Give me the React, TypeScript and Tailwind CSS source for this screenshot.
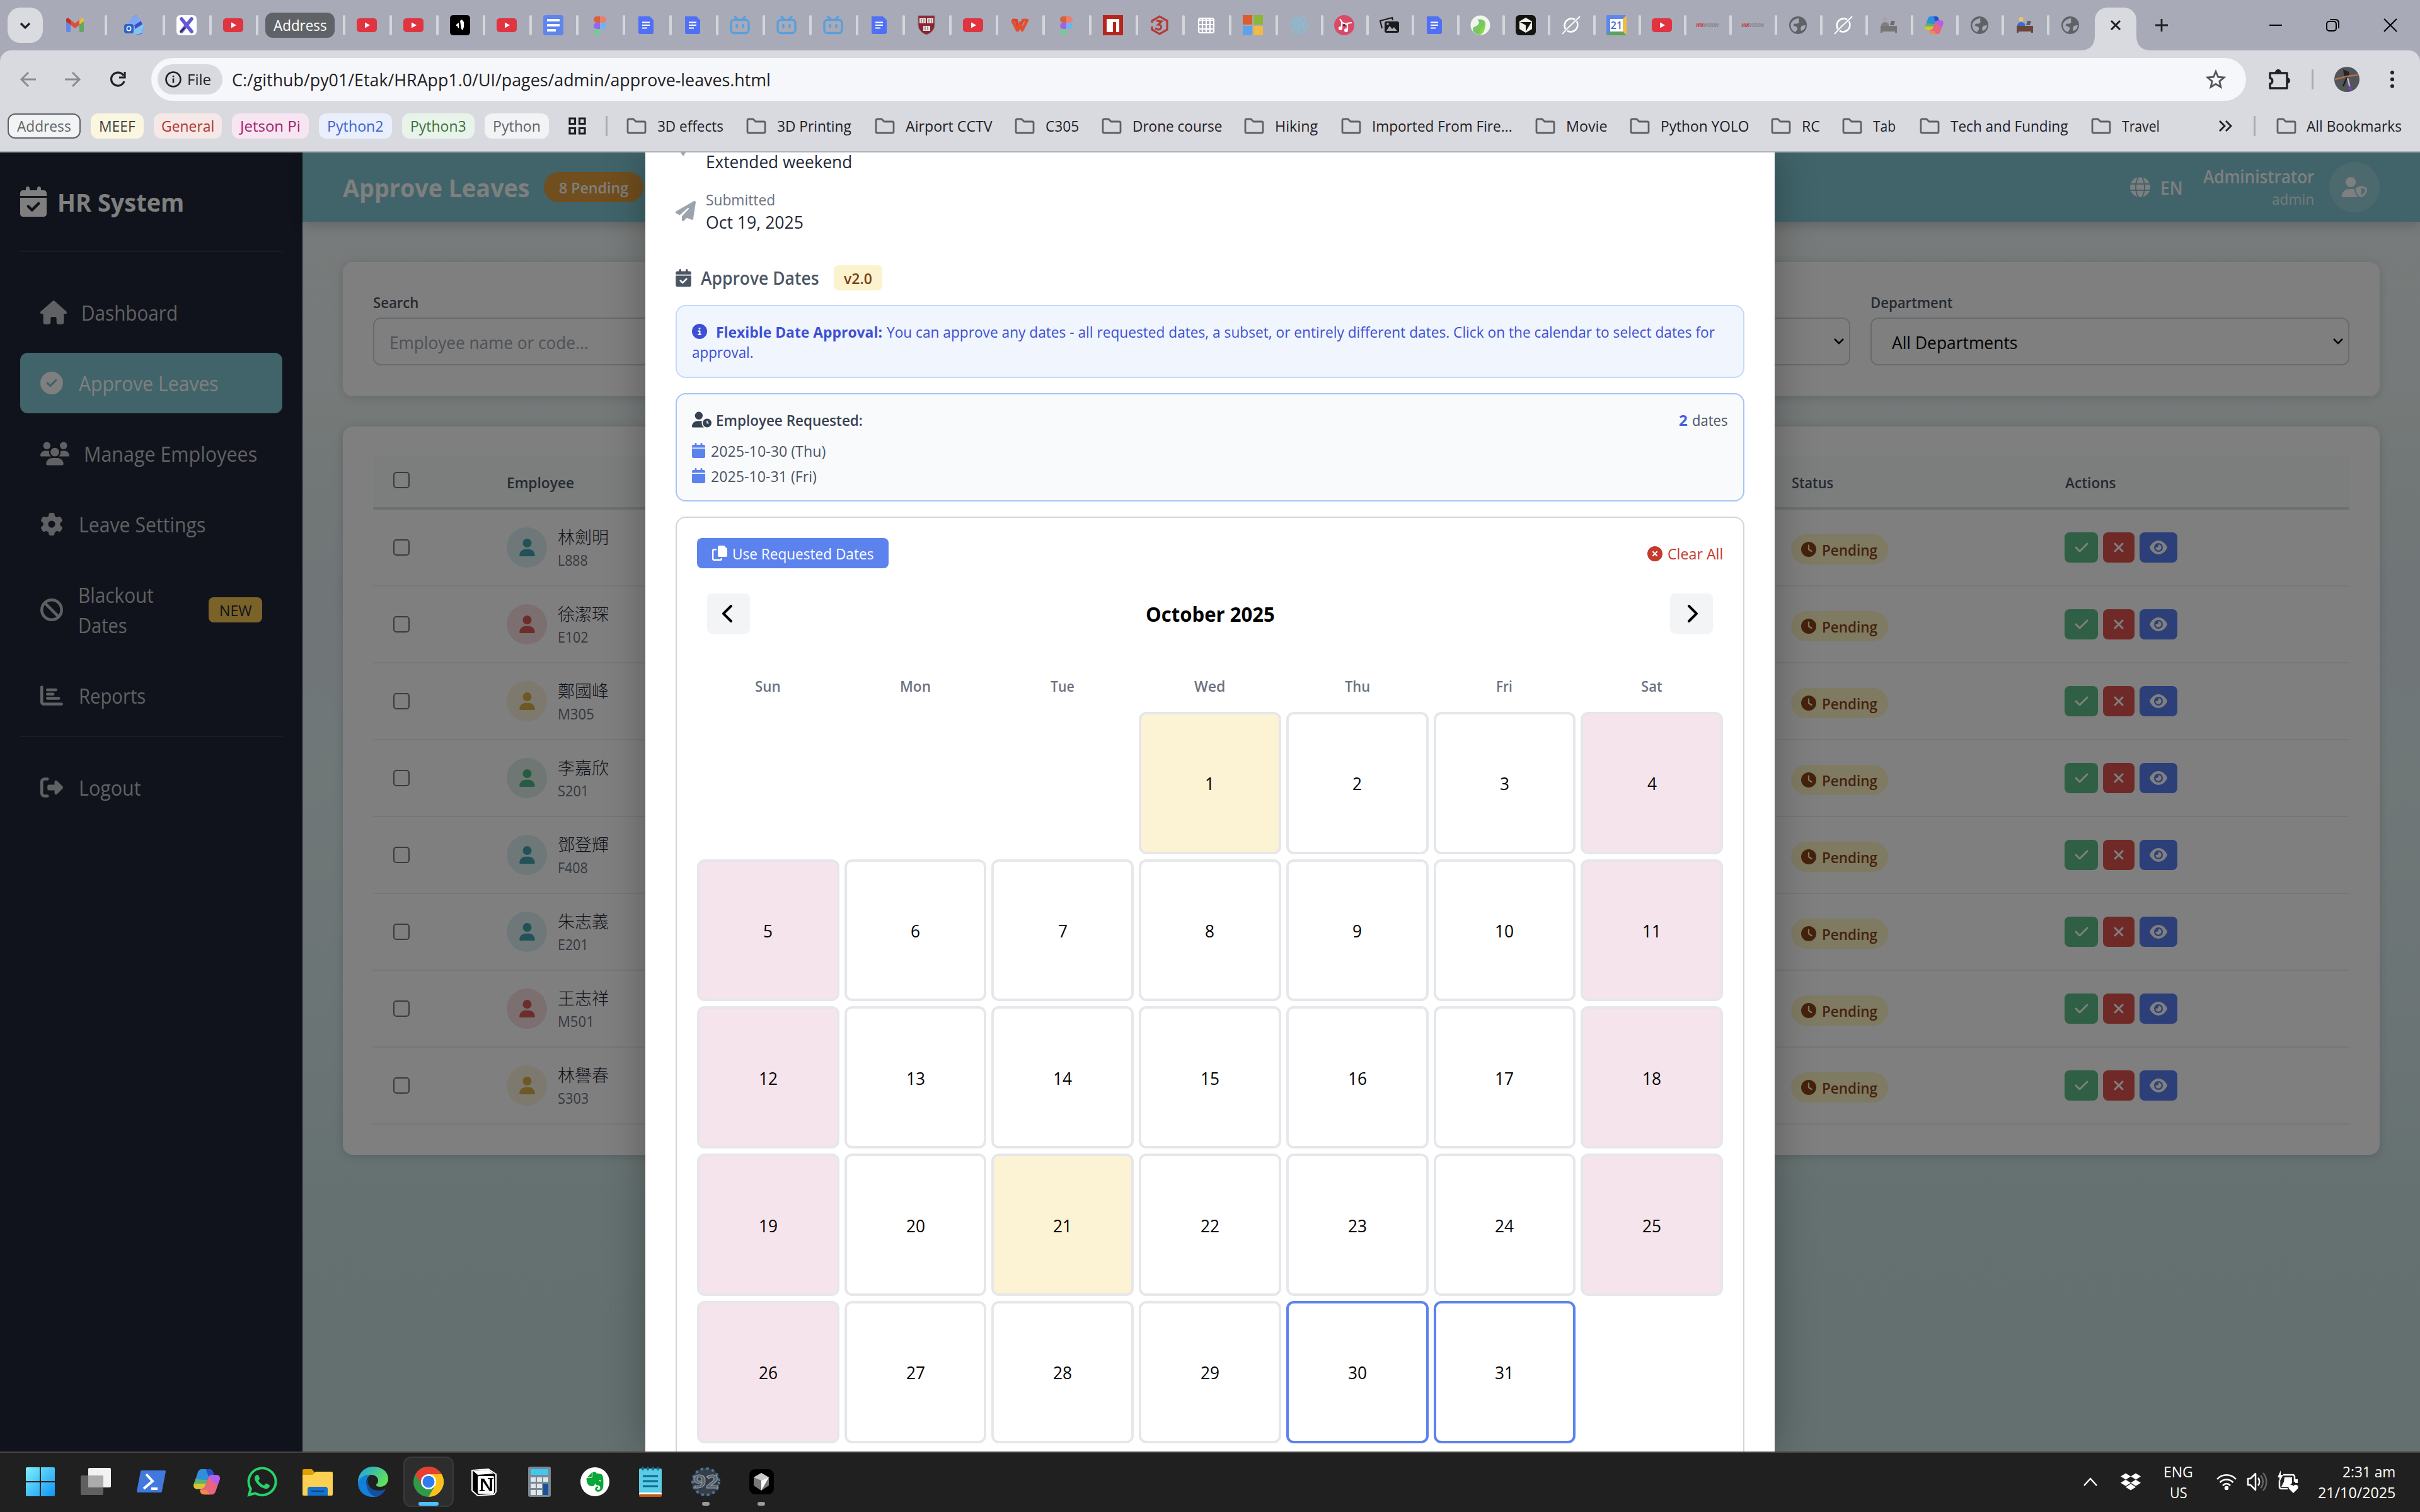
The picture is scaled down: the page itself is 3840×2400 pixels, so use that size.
import { useLayoutEffect, useRef, useState } from "react";
import type { ReactNode } from "react";
import {
  FaBan,
  FaCalendar,
  FaCalendarCheck,
  FaChartBar,
  FaCheck,
  FaChevronLeft,
  FaChevronRight,
  FaCircleCheck,
  FaCircleInfo,
  FaCircleXmark,
  FaClock,
  FaDropbox,
  FaEvernote,
  FaEye,
  FaGear,
  FaGlobe,
  FaHouse,
  FaPaperPlane,
  FaRightFromBracket,
  FaUser,
  FaUserClock,
  FaUserShield,
  FaUsers,
  FaWhatsapp,
  FaXmark,
} from "react-icons/fa6";

/* One line of text, condensed or widened so that it fills the width it is given. */
function Fit({ w, className = "", children }: { w: number; className?: string; children: string }) {
  const ref = useRef<HTMLSpanElement>(null);
  const [scale, setScale] = useState(1);
  useLayoutEffect(() => {
    const el = ref.current;
    if (el && el.offsetWidth > 0) setScale(w / el.offsetWidth);
  }, [w, children]);
  return (
    <span className={"inline-block shrink-0 whitespace-nowrap " + className} style={{ width: w }}>
      <span
        ref={ref}
        className="inline-block origin-left translate-y-[var(--drop,0px)]"
        style={{ transform: `scaleX(${scale})` }}
      >
        {children}
      </span>
    </span>
  );
}

/* ---------- browser tab icons ---------- */

type IconKind =
  | "gmail" | "cloud" | "xtools" | "youtube" | "capcut" | "docs" | "figma" | "page" | "bili" | "shield"
  | "wps" | "npm" | "three" | "grid" | "ms" | "react" | "music" | "photos" | "leaf" | "cursor" | "slash"
  | "cal" | "hik" | "globe" | "deskGray" | "desk" | "copilot";

function Favicon({ kind }: { kind: IconKind }) {
  if (kind === "hik")
    return (
      <span className="text-[8px] font-bold italic leading-none tracking-tighter text-[#86868b]">
        <span className="text-[#c63a3a]">HIK</span>VISION
      </span>
    );
  if (kind === "cal")
    return (
      <span className="relative flex h-8 w-8 items-center justify-center overflow-hidden rounded-[3px] border-b-[6px] border-l-[6px] border-r-[6px] border-t-[6px] border-b-[#5aa35e] border-l-[#5e87ee] border-r-[#f0bd42] border-t-[#5e87ee] bg-white text-[16px] font-semibold leading-none text-[#3b6bd6]">
        21
      </span>
    );
  return (
    <svg viewBox="0 0 32 32" className="h-8 w-8">
      {kind === "gmail" && (
        <g>
          <path d="M2 8v17a2 2 0 0 0 2 2h5V13z" fill="#6287ea" />
          <path d="M30 8v17a2 2 0 0 1-2 2h-5V13z" fill="#5fa763" />
          <path d="M2 8c0-4 3-4 5-2l9 7 9-7v8l-9 7-9-7-5-3z" fill="#d9503f" />
          <path d="M2 8c0-4 3-4 5-2l2 2v7l-7-5z" fill="#b93328" />
          <path d="M30 8c0-4-3-4-5-2l-2 2v7l7-5z" fill="#eebb3c" />
        </g>
      )}
      {kind === "cloud" && (
        <g>
          <path d="M14 3l5-3 9 12 3 8-3 10-9 1z" fill="#3f4fc0" />
          <path d="M14 3l5-3 8 9-17 11-5-7z" fill="#7ea6f2" />
          <path d="M14 24l16-10 1 6-3 9-10 2z" fill="#7fc4f7" />
          <rect x="0" y="14" width="15" height="15" rx="4" fill="#2f62cc" />
          <circle cx="7.500" cy="21.500" r="3.2" fill="none" stroke="#fff" strokeWidth="1.6" />
        </g>
      )}
      {kind === "xtools" && (
        <g>
          <rect width="32" height="32" rx="6" fill="#fff" />
          <path d="M8 6l16 20M24 6L8 26" stroke="#6458d6" strokeWidth="5.500" strokeLinecap="round" />
          <path d="M13 20l-7 7" stroke="#222" strokeWidth="1.800" />
        </g>
      )}
      {kind === "youtube" && (
        <g>
          <rect y="5" width="32" height="22" rx="5" fill="#e03440" />
          <path d="M13 11.500l8 4.500-8 4.500z" fill="#fff" />
        </g>
      )}
      {kind === "capcut" && (
        <g>
          <rect width="32" height="32" rx="5" fill="#000" />
          <path d="M10 15l4-3v9l-2-2v-2h-2zM16 9l3-2 3 4v8l-2 5-2-2z" fill="#fff" />
        </g>
      )}
      {kind === "docs" && (
        <g>
          <rect width="32" height="32" rx="4" fill="#5e84ee" />
          <path d="M6 8h20M6 16h20M6 24h14" stroke="#fff" strokeWidth="4" />
        </g>
      )}
      {kind === "figma" && (
        <g>
          <path d="M16 2h-5a5 5 0 0 0 0 10h5z" fill="#d9603c" />
          <path d="M16 2h5a5 5 0 0 1 0 10h-5z" fill="#ea7f6c" />
          <path d="M16 12h-5a5 5 0 0 0 0 10h5z" fill="#9a63f6" />
          <circle cx="21" cy="17" r="5" fill="#67b6f8" />
          <path d="M16 22h-5a5 5 0 1 0 5 5z" fill="#6fce8f" />
        </g>
      )}
      {kind === "page" && (
        <g>
          <path d="M3 2h18l6 6v19a3 3 0 0 1-3 3H6a3 3 0 0 1-3-3z" fill="#4f70f5" />
          <path d="M9 11.500h12M9 16h12M9 20.500h8" stroke="#fff" strokeWidth="1.900" />
        </g>
      )}
      {kind === "bili" && (
        <g fill="none" stroke="#5a9fdc" strokeWidth="3.400" strokeLinecap="round">
          <rect x="2" y="7.500" width="28" height="21" rx="5" />
          <path d="M8 2.500l4 4M24 2.500l-4 4M11 15.500v3.500M21 15.500v3.500" />
        </g>
      )}
      {kind === "shield" && (
        <g>
          <path d="M3 1h26v14c0 9-7 14-13 16C10 29 3 24 3 15z" fill="#8f2330" stroke="#777" />
          <path d="M5 5h10v8H5zM17 5h10v8H17zM11 17h11v8H11z" fill="#e8e0e0" />
          <path d="M8 6v6M12 6v6M20 6v6M24 6v6M14 18v6M18 18v6" stroke="#555" />
        </g>
      )}
      {kind === "wps" && (
        <g fill="none" strokeWidth="4.500" strokeLinejoin="round">
          <path d="M4 8h7l2 16L22 7" stroke="#dd4030" />
          <path d="M4 8l8 16 5-12 3 12 8-16h-9" stroke="#e2502f" />
        </g>
      )}
      {kind === "npm" && (
        <g>
          <rect width="32" height="32" fill="#b7261b" />
          <path d="M6 6h20v21h-5V11h-5v16H6z" fill="#fff" />
        </g>
      )}
      {kind === "three" && (
        <g fill="none" stroke="#b23c3a" strokeWidth="3.200">
          <path d="M4 12V9l12-7 12 7v14l-12 7-12-7v-5" />
          <path d="M11 9l8 1-5 5c6 0 6 8 0 8l-5-2" />
        </g>
      )}
      {kind === "grid" && (
        <g stroke="#fff" fill="none" strokeWidth="2.200">
          <rect x="4" y="5" width="24" height="23" rx="3" />
          <path d="M4 8h24M4 15h24M4 22h24M10 6v22M16 6v22M22 6v22" />
        </g>
      )}
      {kind === "ms" && (
        <g>
          <path d="M0 0h15v15H0z" fill="#dd5b30" />
          <path d="M17 0h15v15H17z" fill="#8db53a" />
          <path d="M0 17h15v15H0z" fill="#5ea3ea" />
          <path d="M17 17h15v15H17z" fill="#f0ba44" />
        </g>
      )}
      {kind === "react" && (
        <g fill="none" stroke="#84bdd6" strokeWidth="1.800">
          <ellipse cx="16" cy="16" rx="15" ry="6" />
          <ellipse cx="16" cy="16" rx="15" ry="6" transform="rotate(60 16 16)" />
          <ellipse cx="16" cy="16" rx="15" ry="6" transform="rotate(120 16 16)" />
          <circle cx="16" cy="16" r="2" fill="#84bdd6" />
        </g>
      )}
      {kind === "music" && (
        <g>
          <circle cx="16" cy="16" r="16" fill="#d94a66" />
          <path d="M12 20V9M21 24V13l7-1M9 6l4 6 8 3" stroke="#fff" strokeWidth="2.200" fill="none" />
          <circle cx="10" cy="21" r="3" fill="#fff" />
          <circle cx="19" cy="24" r="3" fill="#fff" />
          <circle cx="16" cy="16" r="1.800" fill="#222" />
        </g>
      )}
      {kind === "photos" && (
        <g>
          <path d="M4 21L1 9l19-5 1 4" fill="none" stroke="#1b1b1d" strokeWidth="2.200" />
          <rect x="8" y="10" width="23" height="18" rx="3" fill="#1b1b1d" />
          <path d="M11 25l5-8 4 5 3-3 5 6z" fill="#a8aab7" />
          <circle cx="13" cy="14" r="1.800" fill="#a8aab7" />
        </g>
      )}
      {kind === "leaf" && (
        <g>
          <circle cx="16" cy="16" r="15.500" fill="#f0f6ef" />
          <path d="M11 7c8-2 14 2 13 8-1 9-4 16-10 16C4 30 1 20 8 18c6-2 8-7 3-11z" fill="#76c860" />
          <path d="M24 15c-1 9-4 16-10 16 1-8 5-12 10-16z" fill="#8fd63f" />
        </g>
      )}
      {kind === "cursor" && (
        <g>
          <rect width="32" height="32" rx="6" fill="#13130f" />
          <path d="M16 4l10 6v12l-10 6-10-6V10z" fill="#f2f0ea" />
          <path d="M7 11h18l-9 15V16z" fill="#13130f" />
        </g>
      )}
      {kind === "slash" && (
        <g fill="none" stroke="#fff" strokeWidth="2.600">
          <path d="M22 7a11 11 0 0 0-15 15M10 25a11 11 0 0 0 15-15" />
          <path d="M30 2C20 12 10 20 2 30" strokeWidth="2" />
        </g>
      )}
      {kind === "globe" && (
        <g>
          <circle cx="16" cy="16" r="14" fill="#5f6368" />
          <path d="M18 5c-3 3 2 6-2 8s-5-1-7 2 5 2 6 5-2 5-3 7c-6-2-9-9-7-14 2-4 7-8 13-8zM22 17l6-1c0 4-3 8-7 9l-1-4z" fill="#a8aab7" />
        </g>
      )}
      {(kind === "desk" || kind === "deskGray") && (
        <g>
          <circle cx="10" cy="6.500" r="3.500" fill={kind === "desk" ? "#f0c070" : "#a4a4a6"} />
          <path d="M4 17c0-7 9-8 12-3v3z" fill={kind === "desk" ? "#3c6bd0" : "#808083"} />
          <path d="M20 9h6l-2 7h-6z" fill={kind === "desk" ? "#55606c" : "#6a6a6d"} />
          <path d="M3 17h26v11h-3v-2H6v2H3z" fill={kind === "desk" ? "#6b463c" : "#757575"} />
        </g>
      )}
      {kind === "copilot" && <CopilotShape />}
    </svg>
  );
}

function CopilotShape() {
  return (
    <g>
      <path d="M10 2h9c3 0 4 3 4.500 5l-5 3-4 10c-1 3-3 4-5 4H6c-4 0-5-3-4-6l4-12c.7-2 2-4 4-4z" fill="#2f8fdc" />
      <path d="M3.500 13L2 18c-1 3 0 6 4 6h3.500c2 0 4-1 5-4l2-6z" fill="#5cb36a" />
      <path d="M2 18c-1 3 0 6 4 6h3.500c2 0 4-1 5-4l.7-2z" fill="#d8c432" />
      <path d="M19 2c3 0 4 3 4.500 5l1.500 3h-7l-3-8z" fill="#2450c8" />
      <path d="M22 30h-9c-3 0-4-2-4.500-5l5-3 4-10c1-3 3-3.500 5-3.500h4c4 0 4.500 3 3.500 6l-4 11.500c-.7 2-2 4-4 4z" fill="#e8657e" />
      <path d="M18 11c1-2.500 3-2.500 5-2.500h3.500c4 0 4.500 3 3.500 6l-2 5z" fill="#b45df0" />
      <path d="M13 30c-3 0-4-2-4.500-5h7L20 30z" fill="#f08a4a" />
    </g>
  );
}

const TABS: { kind?: IconKind; w: string }[] = [
  { kind: "gmail", w: "w-[100px] pl-1" },
  { kind: "cloud", w: "w-[92px]" },
  { kind: "xtools", w: "w-[74px]" },
  { kind: "youtube", w: "w-[74px]" },
  { w: "w-[138px]" },
  ...(["youtube", "youtube", "capcut", "youtube", "docs", "figma", "page", "page", "bili", "bili", "bili", "page", "shield",
    "youtube", "wps", "figma", "npm", "three", "grid", "ms"] as IconKind[]).map((kind) => ({ kind, w: "w-[74px]" })),
  ...(["react", "music", "photos", "page", "leaf", "cursor", "slash", "cal", "youtube", "hik", "hik", "globe", "slash",
    "deskGray", "copilot", "globe", "desk"] as IconKind[]).map((kind) => ({ kind, w: "w-[72px]" })),
  { kind: "globe", w: "w-[74px] pr-1" },
];

function TabStrip() {
  return (
    <div className="flex h-20 items-center bg-[#a8aab7] pl-3">
      <div className="flex h-14 w-14 items-center justify-center rounded-[20px] bg-[#dadbe0]">
        <svg viewBox="0 0 20 20" className="h-5 w-5">
          <path d="M3 7l7 7 7-7" fill="none" stroke="#1f2024" strokeWidth="3.200" />
        </svg>
      </div>
      {TABS.map((t, i) => (
        <div key={i} className={"flex shrink-0 items-center " + t.w}>
          <div className="flex flex-1 items-center justify-center">
            {t.kind ? (
              <Favicon kind={t.kind} />
            ) : (
              <span className="flex h-10 w-[110px] items-center justify-center rounded-xl bg-[#5f6368] text-white">
                <Fit w={85}>Address</Fit>
              </span>
            )}
          </div>
          {i < TABS.length - 1 && <div className="-mr-0.5 h-8 w-1 rounded-sm bg-[#d5d6dc]" />}
        </div>
      ))}
      <div className="flex h-20 items-end">
        <svg viewBox="0 0 24 24" className="-ml-6 h-6 w-6">
          <path d="M24 0v24H0c14 0 24-6 24-24z" fill="#d9dae0" />
        </svg>
        <div className="flex h-[68px] w-[66px] items-center justify-center rounded-t-[20px] bg-[#d9dae0] pb-3">
          <svg viewBox="0 0 18 18" className="h-[18px] w-[18px]">
            <path d="M2 2l14 14M16 2L2 16" stroke="#1f2024" strokeWidth="3" />
          </svg>
        </div>
        <svg viewBox="0 0 24 24" className="h-6 w-6">
          <path d="M0 0v24h24C10 24 0 18 0 0z" fill="#d9dae0" />
        </svg>
      </div>
      <svg viewBox="0 0 24 24" className="ml-1 h-6 w-6">
        <path d="M12 2v20M2 12h20" stroke="#1f2024" strokeWidth="2.800" />
      </svg>
      <svg viewBox="0 0 24 24" className="ml-[157px] h-6 w-6">
        <path d="M2 12h20" stroke="#000" strokeWidth="2" />
      </svg>
      <svg viewBox="0 0 24 24" className="ml-[67px] h-6 w-6" fill="none" stroke="#000" strokeWidth="2">
        <rect x="2" y="6" width="15" height="15" rx="4" />
        <path d="M7 3h8c4 0 6 2 6 6v8" />
      </svg>
      <svg viewBox="0 0 24 24" className="ml-[67px] h-6 w-6">
        <path d="M2 2l20 20M22 2L2 22" stroke="#000" strokeWidth="2" />
      </svg>
    </div>
  );
}

function Toolbar() {
  return (
    <div className="bg-[#a8aab7]">
      <div className="flex h-[92px] items-center rounded-t-[18px] bg-[#d9dae0]">
        <svg viewBox="0 0 28 28" className="ml-[31px] h-7 w-7" fill="none" stroke="#8b8c92" strokeWidth="3">
          <path d="M26 14H4M14 3L3 14l11 11" />
        </svg>
        <svg viewBox="0 0 28 28" className="ml-[42px] h-7 w-7" fill="none" stroke="#8b8c92" strokeWidth="3">
          <path d="M2 14h22M14 3l11 11-11 11" />
        </svg>
        <svg viewBox="0 0 28 28" className="ml-[44px] h-7 w-7" fill="none" stroke="#1f2024" strokeWidth="3.200">
          <path d="M24 17a10.500 10.500 0 1 1-1-9M25 2v9h-9" />
        </svg>
        <div className="ml-[39px] flex h-[68px] w-[3324px] items-center rounded-full bg-[#f6f7fa] pl-2.5">
          <div className="flex h-12 w-[103px] items-center rounded-full bg-[#d9dae0] pl-3">
            <svg viewBox="0 0 26 26" className="h-[26px] w-[26px]" fill="none" stroke="#1f2024" strokeWidth="2.600">
              <circle cx="13" cy="13" r="11.500" />
              <path d="M13 11.500v7M13 7v2.600" />
            </svg>
            <Fit w={38} className="ml-[9px] text-[#1f2024]">File</Fit>
          </div>
          <Fit w={855} className="ml-[15px] text-[28px] text-[#1f2024]">
            C:/github/py01/Etak/HRApp1.0/UI/pages/admin/approve-leaves.html
          </Fit>
          <svg viewBox="0 0 32 32" className="ml-auto mr-8 h-8 w-8" fill="none" stroke="#53555c" strokeWidth="2.800">
            <path d="M16 3.500l3.600 8.700 9.400.8-7.200 6.100 2.200 9.200-8-5-8 5 2.200-9.200L3 13l9.400-.8z" />
          </svg>
        </div>
        <svg viewBox="0 0 36 36" className="ml-[34px] h-9 w-9">
          <path d="M4 8h27v24H4v-7c5-1 5-8 0-9z" fill="none" stroke="#1f2024" strokeWidth="3.400" strokeLinejoin="round" />
          <path d="M12 7a5 5 0 0 1 10 0zM31 15a5 5 0 0 1 0 10z" fill="#1f2024" />
        </svg>
        <div className="ml-[34px] h-8 w-[3px] rounded-sm bg-[#a9abb3]" />
        <svg viewBox="0 0 40 40" className="ml-[33px] h-10 w-10">
          <circle cx="20" cy="20" r="20" fill="#50565a" />
          <path d="M14 4l9 4 1 8-8 2z" fill="#2a2220" />
          <path d="M1 20l20-5 17-2" stroke="#b4704a" strokeWidth="2.500" fill="none" />
          <path d="M20 17l-6 14" stroke="#1b1b1f" strokeWidth="2.500" />
          <path d="M21 18c2 5 2 11 5 17" stroke="#c8b8e0" strokeWidth="2.400" fill="none" />
          <path d="M24 31l4 6" stroke="#7a3cc8" strokeWidth="3" />
        </svg>
        <svg viewBox="0 0 8 28" className="ml-12 h-7 w-2" fill="#1f2024">
          <circle cx="4" cy="3.200" r="3" />
          <circle cx="4" cy="14" r="3" />
          <circle cx="4" cy="24.800" r="3" />
        </svg>
      </div>
    </div>
  );
}

function Folder() {
  return (
    <svg viewBox="0 0 32 26" className="h-[26px] w-8 shrink-0">
      <path d="M4 2h7l4 4h13a2 2 0 0 1 2 2v14a2 2 0 0 1-2 2H4a2 2 0 0 1-2-2V4a2 2 0 0 1 2-2z" fill="none" stroke="#5f6166" strokeWidth="2.800" />
    </svg>
  );
}

const GROUPS = [
  { name: "Address", w: 86, cls: "w-[116px] border-2 border-[#5f6368] bg-[#f1f3f4] text-[#5f6368]" },
  { name: "MEEF", w: 58, cls: "w-[84px] bg-[#fbf6e0] text-[#3c3f43]" },
  { name: "General", w: 84, cls: "w-[108px] bg-[#f6e8e6] text-[#b03428]" },
  { name: "Jetson Pi", w: 96, cls: "w-[122px] bg-[#f7e6f1] text-[#a0246e]" },
  { name: "Python2", w: 90, cls: "w-[116px] bg-[#e9effd] text-[#3f63cc]" },
  { name: "Python3", w: 89, cls: "w-[115px] bg-[#e8f3ea] text-[#39703f]" },
  { name: "Python", w: 76, cls: "w-[102px] bg-[#f1f3f4] text-[#5f6368]" },
];

const BOOKMARKS = [
  { name: "3D effects", w: 105, pitch: "w-[190px]" },
  { name: "3D Printing", w: 118, pitch: "w-[204px]" },
  { name: "Airport CCTV", w: 138, pitch: "w-[222px]" },
  { name: "C305", w: 53, pitch: "w-[138px]" },
  { name: "Drone course", w: 142, pitch: "w-[226px]" },
  { name: "Hiking", w: 68, pitch: "w-[154px]" },
  { name: "Imported From Fire...", w: 223, pitch: "w-[308px]" },
  { name: "Movie", w: 66, pitch: "w-[150px]" },
  { name: "Python YOLO", w: 140, pitch: "w-[224px]" },
  { name: "RC", w: 29, pitch: "w-[113px]" },
  { name: "Tab", w: 36, pitch: "w-[123px]" },
  { name: "Tech and Funding", w: 186, pitch: "w-[272px]" },
  { name: "Travel", w: 60, pitch: "w-[202px]" },
];

function BookmarksBar() {
  return (
    <div className="flex h-[70px] items-center border-b-2 border-[#b1b1b8] bg-[#d9dae0] pb-3 pl-3 text-[#1f2024]">
      <div className="flex gap-4">
        {GROUPS.map((g) => (
          <div key={g.name} className={"flex h-10 items-center justify-center rounded-xl " + g.cls}>
            <Fit w={g.w}>{g.name}</Fit>
          </div>
        ))}
      </div>
      <svg viewBox="0 0 28 28" className="ml-[31px] h-7 w-7" fill="none" stroke="#1f2024" strokeWidth="3.200">
        <path d="M2 2h8.500v8.500H2zM17.500 2H26v8.500h-8.500zM2 17.500h8.500V26H2zM17.500 17.500H26V26h-8.500z" />
      </svg>
      <div className="ml-[31px] h-8 w-[3px] bg-[#a9abb3]" />
      <div className="ml-[30px] flex">
        {BOOKMARKS.map((b) => (
          <div key={b.name} className={"flex shrink-0 items-center gap-[17px] " + b.pitch}>
            <Folder />
            <Fit w={b.w}>{b.name}</Fit>
          </div>
        ))}
      </div>
      <svg viewBox="0 0 22 18" className="h-[18px] w-[22px]" fill="none" stroke="#1f2024" strokeWidth="2.800">
        <path d="M2 1l8 8-8 8M12 1l8 8-8 8" />
      </svg>
      <div className="ml-[34px] h-8 w-[3px] bg-[#a9abb3]" />
      <div className="ml-[33px] flex items-center gap-4">
        <Folder />
        <Fit w={151}>All Bookmarks</Fit>
      </div>
    </div>
  );
}

/* ---------- HR application ---------- */

function NavItem({ icon, label, w, active }: { icon: ReactNode; label: string; w: number; active?: boolean }) {
  return (
    <div
      className={
        "flex h-24 items-center gap-[25px] rounded-xl px-8 text-[32px] " +
        (active ? "bg-[#80c8d4] text-white" : "text-[#c0c2c6]")
      }
    >
      {icon}
      <Fit w={w}>{label}</Fit>
    </div>
  );
}

function Sidebar() {
  return (
    <aside className="flex w-[480px] shrink-0 flex-col bg-[#202638] px-8">
      <div className="flex h-[158px] items-center gap-[17px] border-b-2 border-[#353a4c] text-white">
        <FaCalendarCheck className="h-12 w-[42px]" />
        <Fit w={201} className="text-[40px] font-bold">HR System</Fit>
      </div>
      <nav className="mt-[48px] flex flex-col gap-4">
        <NavItem icon={<FaHouse className="-mr-0.5 h-10 w-[42px]" />} label="Dashboard" w={153} />
        <NavItem active icon={<FaCircleCheck className="h-9 w-9" />} label="Approve Leaves" w={222} />
        <NavItem icon={<FaUsers className="-mr-0.5 h-[46px] w-[46px]" />} label="Manage Employees" w={275} />
        <NavItem icon={<FaGear className="h-9 w-9" />} label="Leave Settings" w={201} />
        <div className="flex h-36 items-center px-8 text-[32px] leading-[48px] text-[#c0c2c6]">
          <FaBan className="h-9 w-9" />
          <div className="ml-6 flex flex-col">
            <Fit w={120}>Blackout</Fit>
            <Fit w={78}>Dates</Fit>
          </div>
          <div className="ml-auto flex h-10 w-[85px] items-center justify-center rounded-lg bg-[#f4c450] text-[24px] text-[#1f2937]">
            <Fit w={52}>NEW</Fit>
          </div>
        </div>
        <NavItem icon={<FaChartBar className="h-9 w-9" />} label="Reports" w={106} />
        <div className="h-0.5 bg-[#353a4c]" />
        <div className="mt-4">
          <NavItem icon={<FaRightFromBracket className="h-9 w-9" />} label="Logout" w={99} />
        </div>
      </nav>
    </aside>
  );
}

function Header() {
  return (
    <header className="flex h-[110px] shrink-0 items-center bg-[#80c8d4] pl-16 pr-16 text-white shadow-[0_4px_20px_rgba(0,0,0,0.2)]">
      <Fit w={297} className="text-[40px] font-bold">Approve Leaves</Fit>
      <div className="ml-[22px] flex h-12 w-[158px] items-center justify-center rounded-full bg-[#e09c3a] font-semibold text-white">
        <Fit w={110}>8 Pending</Fit>
      </div>
      <div className="ml-auto flex items-center">
        <FaGlobe className="h-8 w-8" />
        <Fit w={36} className="ml-4 text-[28px] font-semibold">EN</Fit>
        <div className="ml-8 flex flex-col items-end">
          <Fit w={176} className="text-[28px] font-semibold leading-9">Administrator</Fit>
          <Fit w={67} className="leading-9 text-white/80">admin</Fit>
        </div>
        <div className="ml-6 flex h-20 w-20 items-center justify-center rounded-full bg-white/20">
          <FaUserShield className="h-10 w-10" />
        </div>
      </div>
    </header>
  );
}

function SelectBox({ children }: { children?: ReactNode }) {
  return (
    <div className="flex h-[76px] items-center rounded-xl border-2 border-[#d1d5db] bg-white pl-8 pr-1.5 text-[28px] text-black">
      {children}
      <svg viewBox="0 0 20 20" className="ml-auto h-5 w-5">
        <path d="M3 6l7 7 7-7" fill="none" stroke="#000" strokeWidth="2.600" />
      </svg>
    </div>
  );
}

function FieldLabel({ w, children }: { w: number; children: string }) {
  return (
    <div className="flex h-10 items-start">
      <Fit w={w} className="font-semibold leading-[30px] text-[#4b5563]">{children}</Fit>
    </div>
  );
}

function Filters() {
  return (
    <section className="grid h-[213px] shrink-0 grid-cols-4 gap-8 rounded-2xl bg-white px-12 pt-12 shadow-[0_2px_16px_rgba(0,0,0,0.15)]">
      <div>
        <FieldLabel w={72}>Search</FieldLabel>
        <div className="flex h-[76px] items-center rounded-xl border-2 border-[#d1d5db] pl-6 text-[28px] text-[#9ca3af]">
          <Fit w={316}>Employee name or code...</Fit>
        </div>
      </div>
      <div>
        <FieldLabel w={66}>Status</FieldLabel>
        <SelectBox />
      </div>
      <div>
        <FieldLabel w={126}>Leave Type</FieldLabel>
        <SelectBox />
      </div>
      <div>
        <FieldLabel w={131}>Department</FieldLabel>
        <SelectBox>
          <Fit w={199}>All Departments</Fit>
        </SelectBox>
      </div>
    </section>
  );
}

const TEAL = "bg-[#dcf0f2] text-[#44a5b0]";
const RED = "bg-[#f8dede] text-[#d95a5a]";
const YELLOW = "bg-[#faf2dc] text-[#dbb04c]";
const GREEN = "bg-[#dcefe6] text-[#52b788]";

const EMPLOYEES = [
  { name: "林劍明", code: "L888", w: 48, tone: TEAL },
  { name: "徐潔琛", code: "E102", w: 49, tone: RED },
  { name: "鄭國峰", code: "M305", w: 58, tone: YELLOW },
  { name: "李嘉欣", code: "S201", w: 49, tone: GREEN },
  { name: "鄧登輝", code: "F408", w: 48, tone: TEAL },
  { name: "朱志義", code: "E201", w: 49, tone: TEAL },
  { name: "王志祥", code: "M501", w: 58, tone: RED },
  { name: "林譽春", code: "S303", w: 49, tone: YELLOW },
];

function CheckBox() {
  return <div className="h-[26px] w-[26px] rounded-[5px] border-2 border-[#767676] bg-white" />;
}

function LeaveTable() {
  return (
    <section className="h-[1156px] shrink-0 rounded-2xl bg-white px-12 pt-[47px] shadow-[0_2px_16px_rgba(0,0,0,0.15)]">
      <div className="flex h-[85px] items-center border-b-4 border-[#dcdfe4] bg-[#f8fbfa] pl-8 font-semibold text-[#4b5563]">
        <div className="-mt-1.5 w-[180px]">
          <CheckBox />
        </div>
        <Fit w={107}>Employee</Fit>
        <div className="w-[1932px]" />
        <Fit w={66}>Status</Fit>
        <div className="w-[368px]" />
        <Fit w={81}>Actions</Fit>
      </div>
      {EMPLOYEES.map((e) => (
        <div key={e.code} className="flex h-[122px] items-center border-b-2 border-[#eceef1] pl-8">
          <div className="w-[180px]">
            <CheckBox />
          </div>
          <div className={"flex h-16 w-16 items-center justify-center rounded-full " + e.tone}>
            <FaUser className="h-7 w-[25px]" />
          </div>
          <div className="ml-[17px] flex w-[1957px] flex-col pt-0.5">
            <span className="font-['Noto_Sans_CJK_TC',sans-serif] text-[27px] font-light leading-9 text-[#1f2937]">{e.name}</span>
            <Fit w={e.w} className="leading-9 text-[#6b7280]">{e.code}</Fit>
          </div>
          <div className="mt-1.5 flex h-12 w-[154px] items-center gap-[9px] rounded-full bg-[#fff4c4] pl-4 text-[#8a4518]">
            <FaClock className="h-6 w-6" />
            <Fit w={88} className="font-semibold">Pending</Fit>
          </div>
          <div className="ml-[280px] flex gap-2 text-white">
            <div className="flex h-12 w-[53px] items-center justify-center rounded-lg bg-[#5fbe88]">
              <FaCheck className="h-6 w-6" />
            </div>
            <div className="flex h-12 w-[50px] items-center justify-center rounded-lg bg-[#de5450]">
              <FaXmark className="h-6 w-6" />
            </div>
            <div className="flex h-12 w-[60px] items-center justify-center rounded-lg bg-[#587ef0]">
              <FaEye className="h-7 w-7" />
            </div>
          </div>
        </div>
      ))}
    </section>
  );
}

const DAYS = ["Sun", "Mon", "Tue", "Wed", "Thu", "Fri", "Sat"];
const DAY_WIDTHS = [41, 49, 38, 49, 40, 26, 34];

function dayTone(day: number) {
  if (day === 30 || day === 31) return "border-[#5c82ee] bg-white";
  if (day === 1 || day === 21) return "border-[#e5e7eb] bg-[#fbf3d3]";
  if (day % 7 === 4 || day % 7 === 5) return "border-[#e5e7eb] bg-[#f5e4ec]";
  return "border-[#e5e7eb] bg-white";
}

function Calendar() {
  return (
    <div className="mt-6 h-[1600px] shrink-0 rounded-2xl border-2 border-[#d1d5db] p-8">
      <div className="flex items-center justify-between">
        <div className="flex h-12 w-[304px] items-center gap-2 rounded-lg bg-[#5c82ee] pl-6 text-white">
          <svg viewBox="0 0 24 24" className="h-6 w-6">
            <path d="M11 0h8l5 5v11a2 2 0 0 1-2 2H11a2 2 0 0 1-2-2V2a2 2 0 0 1 2-2z" fill="#fff" />
            <path d="M7 6.200H3a1.800 1.800 0 0 0-1.800 1.800v13A1.800 1.800 0 0 0 3 22.800h10a1.800 1.800 0 0 0 1.800-1.800v-1" fill="none" stroke="#fff" strokeWidth="2.400" />
          </svg>
          <Fit w={224}>Use Requested Dates</Fit>
        </div>
        <div className="flex items-center gap-2 text-[#c53a2e]">
          <FaCircleXmark className="mt-px h-6 w-6" />
          <Fit w={88}>Clear All</Fit>
        </div>
      </div>
      <div className="mt-10 flex h-16 items-center justify-between px-4 text-black">
        <div className="flex h-16 w-[68px] items-center justify-center rounded-lg bg-[#f3f4f6]">
          <FaChevronLeft className="h-8 w-7" />
        </div>
        <Fit w={205} className="text-[32px] font-bold">October 2025</Fit>
        <div className="flex h-16 w-[68px] items-center justify-center rounded-lg bg-[#f3f4f6]">
          <FaChevronRight className="h-8 w-7" />
        </div>
      </div>
      <div className="mt-[66px] mb-[26px] grid h-8 grid-cols-7 gap-2 font-semibold leading-8 text-[#6b7280]">
        {DAYS.map((d, i) => (
          <div key={d} className="flex justify-center">
            <Fit w={DAY_WIDTHS[i]}>{d}</Fit>
          </div>
        ))}
      </div>
      <div className="grid grid-cols-7 gap-2 text-[28px] leading-10 text-black">
        <div className="col-span-3" />
        {Array.from({ length: 31 }, (_, i) => i + 1).map((d) => (
          <div key={d} className={"flex aspect-square items-center justify-center rounded-xl border-4 pb-px " + dayTone(d)}>
            <Fit w={d < 10 ? 15 : 30}>{String(d)}</Fit>
          </div>
        ))}
      </div>
    </div>
  );
}

function RequestedDate({ children, w }: { children: string; w: number }) {
  return (
    <div className="flex h-8 items-center gap-[9px] text-[#4b5563]">
      <FaCalendar className="h-6 w-[21px] text-[#5c82ee]" />
      <Fit w={w} className="pb-px">{children}</Fit>
    </div>
  );
}

function Modal() {
  return (
    <div className="flex h-full w-[1792px] flex-col overflow-hidden bg-white px-12 shadow-[0_0_60px_rgba(0,0,0,0.3)]">
      <div className="flex h-[34px] shrink-0 items-start">
        <svg viewBox="0 0 16 8" className="ml-1 h-2 w-4">
          <path d="M4 0h8L8 6z" fill="#9ca3af" />
        </svg>
        <Fit w={232} className="ml-7 text-[28px] leading-[26px] text-[#1f2937]">Extended weekend</Fit>
      </div>
      <div className="mt-6 flex h-[70px] shrink-0 items-center">
        <FaPaperPlane className="h-8 w-8 text-[#9ca3af]" />
        <div className="ml-4 flex flex-col">
          <Fit w={110} className="leading-8 text-[#6b7280]">Submitted</Fit>
          <Fit w={155} className="text-[28px] leading-[38px] text-[#1f2937]">Oct 19, 2025</Fit>
        </div>
      </div>
      <div className="mt-[51px] flex h-10 shrink-0 items-center">
        <FaCalendarCheck className="h-7 w-[25px] text-[#4b5563]" />
        <Fit w={188} className="ml-[15px] pb-[3px] text-[28px] font-semibold text-[#4b5563]">Approve Dates</Fit>
        <div className="ml-[23px] flex h-10 w-[77px] items-center justify-center rounded-lg bg-[#fbf3cd] text-[#7a4018]">
          <Fit w={45} className="font-semibold">v2.0</Fit>
        </div>
      </div>
      <div className="mt-[23px] h-[116px] shrink-0 rounded-2xl border-2 border-[#c5d9fa] bg-[#f0f5fe] px-6 pt-[24px] leading-8 text-[#3d50d3]">
        <div className="flex items-center">
          <FaCircleInfo className="h-6 w-6" />
          <Fit w={264} className="ml-[14px] font-bold">Flexible Date Approval:</Fit>
          <Fit w={1314} className="ml-[7px]">
            You can approve any dates - all requested dates, a subset, or entirely different dates. Click on the calendar to select dates for
          </Fit>
        </div>
        <Fit w={98}>approval.</Fit>
      </div>
      <div className="mt-6 h-[172px] shrink-0 rounded-2xl border-2 border-[#a3c4f7] bg-[#f9fafc] px-6 pt-6">
        <div className="mb-[17px] flex h-8 items-center text-[#374151]">
          <FaUserClock className="h-[30px] w-[31px]" />
          <Fit w={233} className="ml-[7px] pb-px font-semibold">Employee Requested:</Fit>
          <div className="ml-auto flex gap-[7px]">
            <Fit w={14} className="font-bold text-[#4361e4]">2</Fit>
            <Fit w={57} className="text-[#4b5563]">dates</Fit>
          </div>
        </div>
        <div className="flex flex-col gap-2">
          <RequestedDate w={182}>2025-10-30 (Thu)</RequestedDate>
          <RequestedDate w={168}>2025-10-31 (Fri)</RequestedDate>
        </div>
      </div>
      <Calendar />
    </div>
  );
}

/* ---------- taskbar ---------- */

function TaskIcon({ children, active, dot }: { children: ReactNode; active?: boolean; dot?: boolean }) {
  return (
    <div
      className={
        "flex h-20 w-20 flex-col items-center rounded-xl " +
        (active ? "border-2 border-[#3a3a3a] bg-[#2d2d2d] pt-3.5" : "pt-4")
      }
    >
      <svg viewBox="0 0 48 48" className="h-12 w-12">
        {children}
      </svg>
      {active && <div className="mt-2 h-1.5 w-8 rounded-full bg-[#4cc2ff]" />}
      {dot && <div className="mt-2 h-1.5 w-3 rounded-full bg-[#9a9a9a]" />}
    </div>
  );
}

function Taskbar() {
  return (
    <div className="flex h-24 shrink-0 items-center border-t-2 border-[#444] bg-[#202020] pb-0.5 pl-[24px] text-white">
      <div className="flex gap-2">
        <TaskIcon>
          <defs>
            <linearGradient id="win" x1="0" y1="0" x2="1" y2="1">
              <stop offset="0" stopColor="#7ff0fb" />
              <stop offset="1" stopColor="#0f94f5" />
            </linearGradient>
          </defs>
          <path d="M1 3a2 2 0 0 1 2-2h20v22H1zM25 1h20a2 2 0 0 1 2 2v20H25zM1 25h22v22H3a2 2 0 0 1-2-2zM25 25h22v20a2 2 0 0 1-2 2H25z" fill="url(#win)" />
        </TaskIcon>
        <TaskIcon>
          <rect x="0" y="14" width="36" height="31" rx="2" fill="#606060" />
          <rect x="12" y="2" width="36" height="31" rx="2" fill="#f2f2f2" />
          <path d="M12 14h24v19H14a2 2 0 0 1-2-2z" fill="#ababab" />
        </TaskIcon>
        <TaskIcon>
          <path d="M9 6h36a2 2 0 0 1 2 2l-6 31a2 2 0 0 1-2 2H3a2 2 0 0 1-2-2L7 8a2 2 0 0 1 2-2z" fill="#4279dc" />
          <path d="M16 12l10 11-14 12M24 35h10" stroke="#fff" strokeWidth="4" fill="none" />
        </TaskIcon>
        <TaskIcon>
          <g transform="translate(1 1) scale(1.44)">
            <CopilotShape />
          </g>
        </TaskIcon>
        <TaskIcon>
          <FaWhatsapp size={54} x={-3} y={-3} color="#25d366" />
        </TaskIcon>
        <TaskIcon>
          <path d="M0 6a2 2 0 0 1 2-2h13l5 6v6H0z" fill="#dfa000" />
          <path d="M0 13h16l5-5h25a2 2 0 0 1 2 2v34a2 2 0 0 1-2 2H2a2 2 0 0 1-2-2z" fill="#fcd053" />
          <path d="M8 46V36a4 4 0 0 1 4-4h24a4 4 0 0 1 4 4v10z" fill="#1273ce" />
          <path d="M14 39h20" stroke="#0a4a91" strokeWidth="2.500" />
        </TaskIcon>
        <TaskIcon>
          <defs>
            <linearGradient id="edge" x1="0" y1="0" x2="1" y2="0.500">
              <stop offset="0" stopColor="#1f9fe8" />
              <stop offset="1" stopColor="#5fe05c" />
            </linearGradient>
          </defs>
          <path d="M0 25C0 10 11 0 24 0c15 0 24 9 24 19 0 9-7 13-13 13-4 0-6-1-6-3s3-2 3-7c0-6-6-9-11-9C10 13 4 19 0 25z" fill="url(#edge)" />
          <path d="M0 25c3-8 12-13 20-12-5 3-8 9-6 17 2 9 11 15 18 17-13 4-32-2-32-22z" fill="#1380d8" />
          <path d="M17 18c-4 9 2 20 16 20 5 0 9-2 11-3-2 6-8 11-14 13-14-2-20-19-13-30z" fill="#14509f" />
        </TaskIcon>
        <TaskIcon active>
          <circle cx="24" cy="24" r="24" fill="#2e9a4a" />
          <path d="M24 24L3.200 12A24 24 0 0 1 44.800 12H24z" fill="#e8402f" />
          <path d="M24 12h20.800A24 24 0 0 1 24 48l10.400-18z" fill="#fcc21b" />
          <path d="M3.200 12l10.400 18L24 12z" fill="#e8402f" />
          <circle cx="24" cy="24" r="12" fill="#fff" />
          <circle cx="24" cy="24" r="9.500" fill="#2f7cf0" />
        </TaskIcon>
        <TaskIcon>
          <path d="M5 6l26-2 12 8v28l-3 4-26 2-9-8z" fill="#000" stroke="#fff" strokeWidth="2" />
          <path d="M7 7l24-2 8 6-25 2z" fill="#fff" />
          <rect x="14" y="15" width="26" height="28" rx="2" fill="#fff" />
          <path d="M18 19h6l9 15V20h-3v-2h9v2h-2v19h-4L22 23v14h3v2h-8v-2h2V20z" fill="#000" />
        </TaskIcon>
        <TaskIcon>
          <rect x="6" y="0" width="36" height="48" rx="3" fill="#7c8792" />
          <rect x="10" y="4" width="28" height="9" rx="1" fill="#40c8ee" />
          <path d="M10 17h8v7h-8zM20 17h8v7h-8zM30 17h8v7h-8zM10 27h8v7h-8zM20 27h8v7h-8zM10 37h8v8h-8zM20 37h8v8h-8z" fill="#dfe5ea" />
          <path d="M30 27h8v18h-8z" fill="#17529a" />
        </TaskIcon>
        <TaskIcon>
          <circle cx="24" cy="24" r="23" fill="#fff" />
          <FaEvernote size={36} x={6} y={6} color="#09a63a" />
        </TaskIcon>
        <TaskIcon>
          <rect x="6" y="3" width="36" height="38" rx="2" fill="#5ccbe6" />
          <path d="M6 41h36v3H6z" fill="#fff" />
          <path d="M6 44h36v2a2 2 0 0 1-2 2H8a2 2 0 0 1-2-2z" fill="#bd5a14" />
          <path d="M12 0v6M20 0v6M28 0v6M36 0v6M12 15h24M12 23h24M12 31h24" stroke="#0a6c93" strokeWidth="3" />
        </TaskIcon>
        <TaskIcon dot>
          <circle cx="24" cy="24" r="22" fill="#343d48" />
          <circle cx="24" cy="24" r="21" fill="none" stroke="#4f7396" strokeWidth="4" strokeDasharray="4 5" />
          <text x="24" y="34" textAnchor="middle" fontSize="29" fontWeight="bold" fill="#59616a" stroke="#98a2ac" textLength="40" lengthAdjust="spacingAndGlyphs">92</text>
        </TaskIcon>
        <TaskIcon dot>
          <rect x="5" y="4" width="39" height="40" rx="9" fill="#000" />
          <path d="M24 10l12 7v13l-12 8-12-8V17z" fill="#777" />
          <path d="M24 10l12 7-12 5-12-5z" fill="#c9c9c9" />
          <path d="M36 17L24 38V22z" fill="#fff" />
        </TaskIcon>
      </div>
      <div className="ml-auto mr-[39px] flex items-center">
        <svg viewBox="0 0 24 16" className="h-4 w-6" fill="none" stroke="#fff" strokeWidth="2.500">
          <path d="M2 14L12 3l10 11" />
        </svg>
        <FaDropbox className="ml-9 h-8 w-8" />
        <div className="ml-9 flex flex-col items-center leading-[33px]">
          <Fit w={47}>ENG</Fit>
          <Fit w={28}>US</Fit>
        </div>
        <svg viewBox="0 0 32 28" className="ml-[37px] h-7 w-8" fill="none" stroke="#fff" strokeWidth="2.500">
          <path d="M1 10c8-9 22-9 30 0M5.500 15c6-6 15-6 21 0M10 20c4-4 8-4 12 0" />
          <circle cx="16" cy="24" r="2" fill="#fff" />
        </svg>
        <svg viewBox="0 0 34 34" className="ml-4 h-[34px] w-[34px]" fill="none" stroke="#fff" strokeWidth="2.500">
          <path d="M2 12h4l8-8v26l-8-8H2z" strokeLinejoin="round" />
          <path d="M18 11c3 3 3 9 0 12" />
          <path d="M22 7c5 5 5 15 0 20M26 3c7 8 7 20 0 28" stroke="#666" />
        </svg>
        <svg viewBox="0 0 34 36" className="ml-3.5 h-9 w-[34px]">
          <path d="M10 7h15a3 3 0 0 1 3 3v8M4 16v10a3 3 0 0 0 3 3h10" fill="none" stroke="#fff" strokeWidth="2.500" />
          <path d="M12 11h12v9l-6 6H7l4-8zM6 0v7h4L4 18v-7H1zM29 14h4v6h-4zM26 36l-7-7c-3-5 4-9 7-4 3-5 10-1 7 4z" fill="#fff" />
        </svg>
        <div className="ml-[30px] flex w-[124px] flex-col items-end leading-[33px]">
          <Fit w={84}>2:31 am</Fit>
          <Fit w={123}>21/10/2025</Fit>
        </div>
      </div>
    </div>
  );
}

export default function App() {
  return (
    <div className="flex h-[2400px] w-[3840px] flex-col overflow-hidden bg-[#202020] font-['Open_Sans','Noto_Sans',sans-serif] text-[24px] leading-normal">
      <TabStrip />
      <Toolbar />
      <BookmarksBar />
      <div className="relative flex h-[2062px] shrink-0 overflow-hidden [--drop:1px]">
        <Sidebar />
        <div className="flex w-[3360px] flex-col bg-[linear-gradient(180deg,#f2f6f6_0%,#ecf5f4_18%,#e4f0ee_24%,#e1eaf0_34%,#e0eff0_45%,#d6e8e9_70%,#c8e2e0_82%,#c6e0de_100%)]">
          <Header />
          <main className="flex flex-col gap-12 px-16 pt-16">
            <Filters />
            <LeaveTable />
          </main>
        </div>
        <div className="absolute inset-0 flex justify-center bg-black/50">
          <Modal />
        </div>
      </div>
      <Taskbar />
    </div>
  );
}
